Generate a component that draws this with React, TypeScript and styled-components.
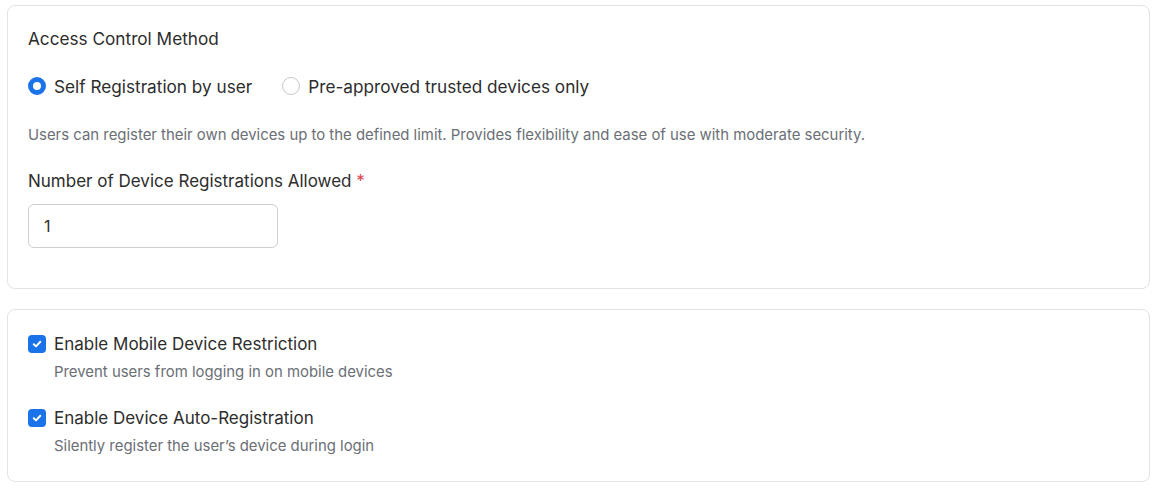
import React from "react";
import styled, { createGlobalStyle } from "styled-components";

const GlobalStyle = createGlobalStyle`
    * { box-sizing: border-box; }
    body {
        margin: 0;
        background: #ffffff;
        font-family: Inter, "Noto Sans", "DejaVu Sans", sans-serif;
        color: #2b2b2b;
    }
`;

const options = [
    { id: "self", label: "Self Registration by user" },
    { id: "trusted", label: "Pre-approved trusted devices only" },
];

const toggles = [
    { title: "Enable Mobile Device Restriction", desc: "Prevent users from logging in on mobile devices" },
    { title: "Enable Device Auto-Registration", desc: "Silently register the user\u2019s device during login" },
];

function CheckIcon() {
    return (
        <svg width="12" height="12" viewBox="0 0 12 12" fill="none">
            <path d="M2.8 6.3 L5 8.4 L9.3 3.8" stroke="#fff" strokeWidth="2" strokeLinecap="round" strokeLinejoin="round" />
        </svg>
    );
}

export default function App() {
    const selected = "self";
    return (
        <Page>
            <GlobalStyle />
            <Card $height={284} $padTop={21}>
                <SectionTitle>Access Control Method</SectionTitle>
                <RadioRow>
                    {options.map((o) => (
                        <RadioOption key={o.id}>
                            <Radio $checked={o.id === selected} />
                            {o.label}
                        </RadioOption>
                    ))}
                </RadioRow>
                <Hint>
                    Users can register their own devices up to the defined limit. Provides flexibility and ease of use with moderate security.
                </Hint>
                <FieldLabel>
                    Number of Device Registrations Allowed <Required>*</Required>
                </FieldLabel>
                <NumberInput>1</NumberInput>
            </Card>
            <Card $height={173} $padTop={22}>
                {toggles.map((t) => (
                    <ToggleItem key={t.title}>
                        <ToggleHead>
                            <Checkbox>
                                <CheckIcon />
                            </Checkbox>
                            {t.title}
                        </ToggleHead>
                        <ToggleDesc>{t.desc}</ToggleDesc>
                    </ToggleItem>
                ))}
            </Card>
        </Page>
    );
}

const Page = styled.div`
    padding: 5px 8px 0 7px;
    display: flex;
    flex-direction: column;
    gap: 20px;
`;

const Card = styled.div<{ $height: number; $padTop: number }>`
    height: ${(p) => p.$height}px;
    border: 1px solid #e3e3e3;
    border-radius: 8px;
    padding: ${(p) => p.$padTop}px 20px 0 20px;
`;

const SectionTitle = styled.div`
    font-size: 17.2px;
    line-height: 24px;
    color: #2d2d2d;
`;

const RadioRow = styled.div`
    display: flex;
    gap: 30px;
    margin-top: 23px;
    height: 24px;
    align-items: center;
`;

const RadioOption = styled.label`
    display: flex;
    align-items: center;
    gap: 8px;
    font-size: 17.2px;
    color: #2d2d2d;
`;

const Radio = styled.span<{ $checked: boolean }>`
    width: 18px;
    height: 18px;
    border-radius: 50%;
    background: #fff;
    border: ${(p) => (p.$checked ? "5px solid #1a73e8" : "1px solid #c8c8c8")};
`;

const Hint = styled.div`
    margin-top: 27px;
    font-size: 14.9px;
    line-height: 20px;
    color: #6b6f76;
`;

const FieldLabel = styled.div`
    margin-top: 24px;
    font-size: 17px;
    line-height: 24px;
    color: #2d2d2d;
`;

const Required = styled.span`
    color: #e0404d;
`;

const NumberInput = styled.div`
    margin-top: 11px;
    width: 250px;
    height: 44px;
    border: 1px solid #cfcfcf;
    border-radius: 6px;
    padding: 0 15px;
    display: flex;
    align-items: center;
    font-size: 16px;
    color: #2d2d2d;
`;

const ToggleItem = styled.div`
    & + & {
        margin-top: 24px;
    }
`;

const ToggleHead = styled.div`
    display: flex;
    align-items: center;
    gap: 8px;
    font-size: 17px;
    line-height: 24px;
    color: #2d2d2d;
`;

const Checkbox = styled.span`
    width: 18px;
    height: 18px;
    border-radius: 4px;
    background: #1a73e8;
    display: flex;
    align-items: center;
    justify-content: center;
`;

const ToggleDesc = styled.div`
    margin-top: 6px;
    padding-left: 26px;
    font-size: 14.9px;
    line-height: 20px;
    color: #6b6f76;
`;
